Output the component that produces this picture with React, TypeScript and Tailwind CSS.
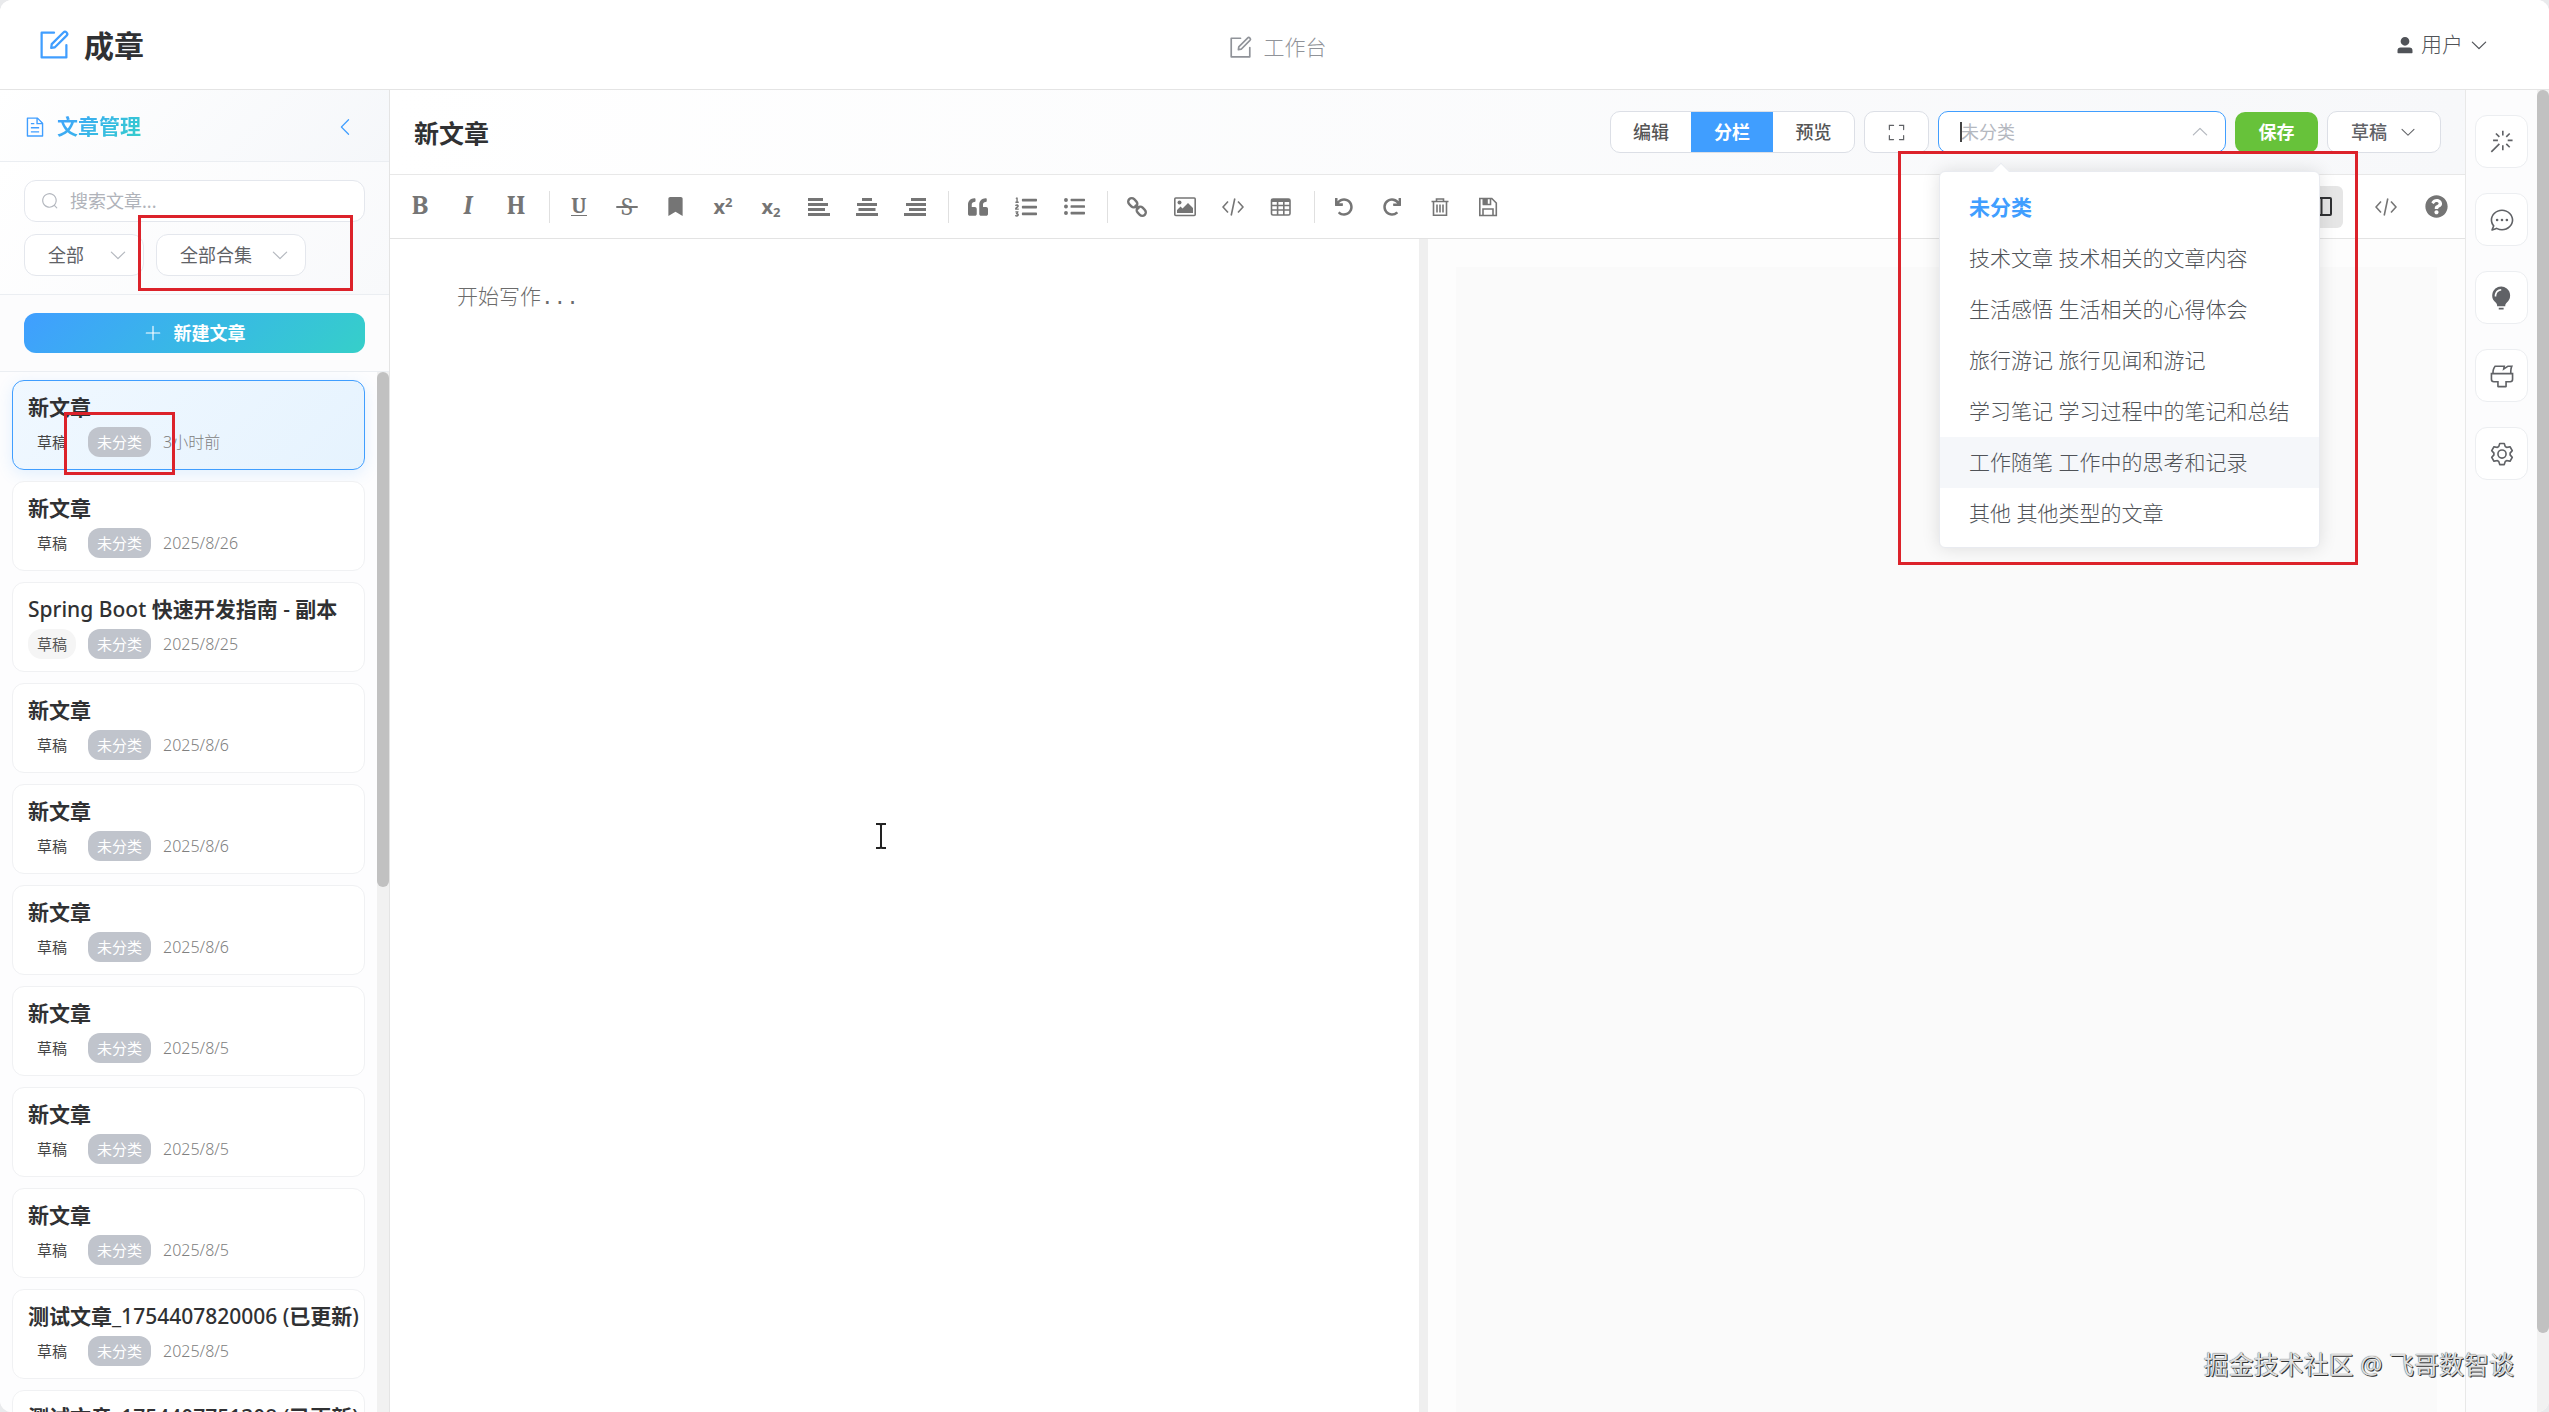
import React from "react";
import {
  FaBookmark,
  FaListOl,
  FaListUl,
  FaQuestionCircle,
  FaQuoteLeft,
  FaRedo,
  FaUndo,
} from "react-icons/fa";

const paths = {
  edit: "M832 512a32 32 0 1 1 64 0v352a32 32 0 0 1-32 32H160a32 32 0 0 1-32-32V160a32 32 0 0 1 32-32h352a32 32 0 0 1 0 64H192v640h640z m-362.048 42.24 52.8-7.552L847.104 222.4a32 32 0 1 0-45.248-45.248L477.44 501.44l-7.552 52.8zm422.4-422.4a96 96 0 0 1 0 135.808l-331.84 331.84a32 32 0 0 1-18.112 9.088L436.8 623.68a32 32 0 0 1-36.224-36.224l15.104-105.6a32 32 0 0 1 9.024-18.112l331.904-331.84a96 96 0 0 1 135.744 0z",
  arrowDown:
    "M831.872 340.864 512 652.672 192.128 340.864a30.592 30.592 0 0 0-42.752 0 29.12 29.12 0 0 0 0 41.6L489.664 714.24a32 32 0 0 0 44.672 0l340.288-331.712a29.12 29.12 0 0 0 0-41.728 30.592 30.592 0 0 0-42.752 0z",
  arrowLeft:
    "M609.408 149.376 277.76 489.6a32 32 0 0 0 0 44.672l331.648 340.352a29.12 29.12 0 0 0 41.728 0 30.592 30.592 0 0 0 0-42.752L339.264 511.936l311.872-319.872a30.592 30.592 0 0 0 0-42.688 29.12 29.12 0 0 0-41.728 0z",
  document:
    "M832 384H576V128H192v768h640zm-26.496-64L640 154.496V320zM160 64h480l256 256v608a32 32 0 0 1-32 32H160a32 32 0 0 1-32-32V96a32 32 0 0 1 32-32m160 448h384v64H320zm0-192h160v64H320zm0 384h384v64H320z",
  search:
    "m795.904 750.72 124.992 124.928a32 32 0 0 1-45.248 45.248L750.656 795.904a416 416 0 1 1 45.248-45.248zM480 832a352 352 0 1 0 0-704 352 352 0 0 0 0 704",
  plus: "M480 480V128a32 32 0 0 1 64 0v352h352a32 32 0 1 1 0 64H544v352a32 32 0 1 1-64 0V544H128a32 32 0 0 1 0-64z",
  fullScreen:
    "m160 96.064 192 .192a32 32 0 0 1 0 64l-192-.192V352a32 32 0 0 1-64 0V96h64zm0 831.872V928H96V672a32 32 0 1 1 64 0v191.936l192-.192a32 32 0 1 1 0 64zM864 96.064V96h64v256a32 32 0 1 1-64 0V160.064l-192 .192a32 32 0 1 1 0-64l192-.192zm0 831.872-192-.192a32 32 0 0 1 0-64l192 .192V672a32 32 0 1 1 64 0v256h-64z",
  user: "M288 320a224 224 0 1 0 448 0 224 224 0 1 0-448 0m544 608H160a32 32 0 0 1-32-32v-96a160 160 0 0 1 160-160h448a160 160 0 0 1 160 160v96a32 32 0 0 1-32 32z",
  magic:
    "M512 64h64v192h-64zm0 576h64v192h-64zM160 480v-64h192v64zm576 0v-64h192v64zM249.856 199.04l45.248-45.184L430.848 289.6 385.6 334.848 249.856 199.104zM657.152 606.4l45.248-45.248 135.744 135.744-45.248 45.248zM114.048 923.2 68.8 877.952l316.8-316.8 45.248 45.248zM702.4 334.848 657.152 289.6l135.744-135.744 45.248 45.248z",
  chat: "m174.72 855.68 135.296-45.12 23.68 11.84C388.096 849.536 448.576 864 512 864c211.84 0 384-166.784 384-352S723.84 160 512 160 128 326.784 128 512c0 69.12 24.96 139.264 70.848 199.232l22.08 28.8-46.272 115.584zm-45.248 82.56A32 32 0 0 1 89.6 896l58.368-145.92C94.72 680.32 64 596.864 64 512 64 299.904 256 96 512 96s448 203.904 448 416-192 416-448 416a461.056 461.056 0 0 1-206.912-48.384l-175.616 58.56z M512 563.2a51.2 51.2 0 1 1 0-102.4 51.2 51.2 0 0 1 0 102.4m192 0a51.2 51.2 0 1 1 0-102.4 51.2 51.2 0 0 1 0 102.4m-384 0a51.2 51.2 0 1 1 0-102.4 51.2 51.2 0 0 1 0 102.4",
  bulb: "M384 960v-64h192.064v64zm448-544a350.656 350.656 0 0 1-128.32 271.424C665.344 719.04 640 763.776 640 813.504V832H320v-14.336c0-48-19.392-95.36-57.216-124.992a351.552 351.552 0 0 1-128.448-344.256c25.344-136.448 133.888-248.128 269.76-276.48A352.384 352.384 0 0 1 832 416m-544 32c0-132.288 75.904-224 192-224v-64c-154.432 0-256 122.752-256 288z",
  brush:
    "M896 448H128v192a64 64 0 0 0 64 64h192v192h256V704h192a64 64 0 0 0 64-64zm-770.752-64c0-47.552 5.248-90.24 15.552-128 14.72-54.016 42.496-107.392 83.2-160h417.28l-15.36 70.336L736 96h211.2c-24.832 42.88-41.92 96.256-51.2 160a663.872 663.872 0 0 0-6.144 128H960v256a128 128 0 0 1-128 128H704v160a32 32 0 0 1-32 32H352a32 32 0 0 1-32-32V768H192A128 128 0 0 1 64 640V384h61.248zm64 0h636.544c-2.048-45.824.256-91.584 6.848-137.216 4.48-30.848 10.688-59.776 18.688-86.784h-96.64l-221.12 141.248L561.92 160H256.512c-25.856 37.888-43.776 75.456-53.952 112.832-8.768 32.064-13.248 69.12-13.312 111.168z",
  setting:
    "M600.704 64a32 32 0 0 1 30.464 22.208l35.2 109.376c14.784 7.232 28.928 15.36 42.432 24.512l112.384-24.192a32 32 0 0 1 34.432 15.36L944.32 364.8a32 32 0 0 1-4.032 37.504l-77.12 85.12a357.12 357.12 0 0 1 0 49.024l77.12 85.248a32 32 0 0 1 4.032 37.504l-88.704 153.6a32 32 0 0 1-34.432 15.296L708.8 803.904c-13.44 9.088-27.648 17.28-42.368 24.512l-35.264 109.376A32 32 0 0 1 600.704 960H423.296a32 32 0 0 1-30.464-22.208L357.696 828.48a351.616 351.616 0 0 1-42.56-24.64l-112.32 24.256a32 32 0 0 1-34.432-15.36L79.68 659.2a32 32 0 0 1 4.032-37.504l77.12-85.248a357.12 357.12 0 0 1 0-48.896l-77.12-85.248A32 32 0 0 1 79.68 364.8l88.704-153.6a32 32 0 0 1 34.432-15.296l112.32 24.256c13.568-9.152 27.776-17.408 42.56-24.64l35.2-109.312A32 32 0 0 1 423.232 64H600.64zm-23.424 64H446.72l-36.352 113.088-24.512 11.968a294.113 294.113 0 0 0-34.816 20.096l-22.656 15.36-116.224-25.088-65.28 113.152 79.68 88.192-1.92 27.136a293.12 293.12 0 0 0 0 40.192l1.92 27.136-79.808 88.192 65.344 113.152 116.224-25.024 22.656 15.296a294.113 294.113 0 0 0 34.816 20.096l24.512 11.968L446.72 896h130.688l36.48-113.152 24.448-11.904a288.282 288.282 0 0 0 34.752-20.096l22.592-15.296 116.288 25.024 65.28-113.152-79.744-88.192 1.92-27.136a293.12 293.12 0 0 0 0-40.256l-1.92-27.136 79.808-88.128-65.344-113.152-116.288 24.96-22.592-15.232a287.616 287.616 0 0 0-34.752-20.096l-24.448-11.904L577.344 128zM512 320a192 192 0 1 1 0 384 192 192 0 0 1 0-384m0 64a128 128 0 1 0 0 256 128 128 0 0 0 0-256",
};

const Icon = ({
  name,
  className,
}: {
  name: keyof typeof paths;
  className?: string;
}) => (
  <svg viewBox="0 0 1024 1024" fill="currentColor" className={className} aria-hidden="true">
    <path d={paths[name]} />
  </svg>
);

const Drawn = ({ children }: { children: React.ReactNode }) => (
  <svg
    viewBox="0 0 22 22"
    fill="none"
    stroke="currentColor"
    strokeWidth="1.6"
    className="size-[22px]"
    aria-hidden="true"
  >
    {children}
  </svg>
);

const CodeIcon = () => (
  <Drawn>
    <path d="M6 5.500 1 11l5 5.500M16 5.500 21 11l-5 5.500M12.800 2.500 9.200 19.500" />
  </Drawn>
);

// Three short bars over a full one, pushed left, centre or right
const AlignIcon = ({ side }: { side: "left" | "center" | "right" }) => {
  const x = (width: number) =>
    side === "left" ? 0 : side === "right" ? 22 - width : (22 - width) / 2;
  return (
    <svg viewBox="0 0 22 22" fill="currentColor" className="size-[22px]" aria-hidden="true">
      {[15, 20, 17, 22].map((width, i) => (
        <rect
          key={width}
          x={i === 0 && side === "center" ? 6 : x(width)}
          y={2 + i * 5}
          width={i === 0 && side === "center" ? 10 : width}
          height="3"
        />
      ))}
    </svg>
  );
};

const toolGroups = [
  [
    { label: "粗体", icon: <span className="font-serif text-[26px] font-bold">B</span> },
    { label: "斜体", icon: <span className="font-serif text-[26px] font-bold italic">I</span> },
    { label: "标题", icon: <span className="font-serif text-[26px] font-bold">H</span> },
  ],
  [
    {
      label: "下划线",
      icon: (
        <span className="border-b border-current font-serif text-[22px] leading-[18px] font-bold">
          U
        </span>
      ),
    },
    {
      label: "中划线",
      icon: <span className="font-serif text-[24px] line-through">&nbsp;S&nbsp;</span>,
    },
    { label: "标记", icon: <FaBookmark className="size-[19px]" /> },
    {
      label: "上角标",
      icon: (
        <span className="text-[20px] font-bold">
          x<sup className="text-[13px]">2</sup>
        </span>
      ),
    },
    {
      label: "下角标",
      icon: (
        <span className="text-[20px] font-bold">
          x<sub className="text-[13px]">2</sub>
        </span>
      ),
    },
    { label: "居左", icon: <AlignIcon side="left" /> },
    { label: "居中", icon: <AlignIcon side="center" /> },
    { label: "居右", icon: <AlignIcon side="right" /> },
  ],
  [
    { label: "段落引用", icon: <FaQuoteLeft className="size-[20px]" /> },
    { label: "有序列表", icon: <FaListOl className="size-[22px]" /> },
    { label: "无序列表", icon: <FaListUl className="size-[21px]" /> },
  ],
  [
    {
      label: "链接",
      icon: (
        <Drawn>
          <g transform="rotate(45 11 11)" strokeWidth="2.400">
            <rect x="0" y="7.500" width="10" height="7" rx="3.500" />
            <rect x="12" y="7.500" width="10" height="7" rx="3.500" />
            <path d="M8 11h6" strokeWidth="2" />
          </g>
        </Drawn>
      ),
    },
    {
      label: "添加图片",
      icon: (
        <Drawn>
          <rect x="0.800" y="2" width="20.400" height="17.500" rx="1" />
          <circle cx="5.500" cy="6.500" r="2" fill="currentColor" stroke="none" />
          <path d="M3 17v-3l3.500-3.500 2 2L14 7l5 5v5z" fill="currentColor" stroke="none" />
        </Drawn>
      ),
    },
    { label: "代码块", icon: <CodeIcon /> },
    {
      label: "添加表格",
      icon: (
        <Drawn>
          <rect x="1.500" y="3" width="18.500" height="16" rx="1.500" />
          <path d="M1.500 4.500h18.500" strokeWidth="3" />
          <path d="M1.500 9.500h18.500M1.500 14h18.500M7.600 4v15M13.800 4v15" />
        </Drawn>
      ),
    },
  ],
  [
    { label: "上一步", icon: <FaUndo className="size-[18px]" /> },
    { label: "下一步", icon: <FaRedo className="size-[18px]" /> },
    {
      label: "清空",
      icon: (
        <Drawn>
          <path d="M2.500 5.500h17M7.500 5V3h7v2M4.500 6v13.200h13V6M8 8.500v8M11 8.500v8M14 8.500v8" />
        </Drawn>
      ),
    },
    {
      label: "保存",
      icon: (
        <Drawn>
          <path d="M2.800 2.500h12l4.500 4.500v12.500H2.800z M6 19v-6h10v6M6.500 3v5.500h7V3" />
          <path d="M6.500 3h3.500v5h-3.500z" fill="currentColor" />
        </Drawn>
      ),
    },
  ],
];

const articles = [
  { title: "新文章", date: "3小时前" },
  { title: "新文章", date: "2025/8/26" },
  { title: "Spring Boot 快速开发指南 - 副本", date: "2025/8/25" },
  { title: "新文章", date: "2025/8/6" },
  { title: "新文章", date: "2025/8/6" },
  { title: "新文章", date: "2025/8/6" },
  { title: "新文章", date: "2025/8/5" },
  { title: "新文章", date: "2025/8/5" },
  { title: "新文章", date: "2025/8/5" },
  { title: "测试文章_1754407820006 (已更新)", date: "2025/8/5" },
  { title: "测试文章_1754407751308 (已更新)", date: "2025/8/5" },
];

const categories = [
  "未分类",
  "技术文章 技术相关的文章内容",
  "生活感悟 生活相关的心得体会",
  "旅行游记 旅行见闻和游记",
  "学习笔记 学习过程中的笔记和总结",
  "工作随笔 工作中的思考和记录",
  "其他 其他类型的文章",
];

const railItems: { label: string; icon: keyof typeof paths }[] = [
  { label: "智能生成", icon: "magic" },
  { label: "对话", icon: "chat" },
  { label: "灵感", icon: "bulb" },
  { label: "润色", icon: "brush" },
  { label: "设置", icon: "setting" },
];

const Header = () => (
  <header className="grid h-[90px] shrink-0 grid-cols-[1fr_auto_1fr] items-center border-b border-[#e4e4e4] bg-white px-9">
    <h1 className="flex items-center gap-3 text-[30px] font-bold text-[#303133]">
      <Icon name="edit" className="size-[36px] text-[#409eff]" />
      <span className="pt-[2px]">成章</span>
    </h1>
    <a
      href="#workbench"
      className="flex items-center gap-[10px] pt-[6px] pl-1 text-[21px] font-light text-[#909399]"
    >
      <Icon name="edit" className="size-[27px]" />
      工作台
    </a>
    <button className="flex items-center gap-[6px] justify-self-end pr-6 text-[21px] font-light text-[#505358]">
      <Icon name="user" className="size-[20px]" />
      用户
      <Icon name="arrowDown" className="size-[20px]" />
    </button>
  </header>
);

const Filter = ({ label, className }: { label: string; className: string }) => (
  <div className={`relative ${className}`}>
    <select
      aria-label={label}
      className="h-[42px] w-full appearance-none rounded-xl border border-[#e4e7ed] bg-white pl-[23px] text-lg text-[#606266]"
    >
      <option>{label}</option>
    </select>
    <Icon
      name="arrowDown"
      className="pointer-events-none absolute top-[11px] right-4 size-5 text-[#b4b8bf]"
    />
  </div>
);

// Latin runs are set a step lighter than the Chinese around them
const Title = ({ text }: { text: string }) => (
  <>
    {text.split(/([\x20-\x7e]+)/).map((part, i) => (
      <span key={i} className={i % 2 ? "font-medium" : "font-bold"}>
        {part}
      </span>
    ))}
  </>
);

const Sidebar = () => (
  <aside className="flex w-[390px] shrink-0 flex-col border-r border-[#e4e4e4] bg-[#fdfdfe]">
    <div className="flex h-[72px] shrink-0 items-center border-b border-[#ebeef2] bg-linear-135 from-white to-[#f5f7fa] pt-[2px] pr-8 pl-6">
      <Icon name="document" className="size-[22px] text-[#409eff]" />
      <h2 className="ml-[11px] bg-linear-135 from-[#409eff] to-[#36cfc9] bg-clip-text text-[21px] font-bold text-transparent">
        文章管理
      </h2>
      <button aria-label="收起" className="ml-auto text-[#409eff]">
        <Icon name="arrowLeft" className="size-[22px]" />
      </button>
    </div>

    <div className="flex h-[133px] shrink-0 flex-col gap-3 border-b border-[#ebeef2] bg-linear-135 from-white to-[#f8f9fb] pt-[18px] pr-6 pl-6">
      <div className="relative">
        <Icon name="search" className="absolute top-3 left-[17px] size-[18px] text-[#b4b8bf]" />
        <input
          type="text"
          aria-label="搜索文章"
          placeholder="搜索文章..."
          className="h-[42px] w-full rounded-xl border border-[#e4e7ed] bg-white pl-[45px] text-lg placeholder:text-[#b0b3ba]"
        />
      </div>
      <div className="relative flex gap-3">
        <Filter label="全部" className="w-[120px]" />
        <Filter label="全部合集" className="w-[150px]" />
        <div className="pointer-events-none absolute -top-[19px] left-[114px] h-[76px] w-[215px] border-3 border-[#dc222a]" />
      </div>
    </div>

    <div className="flex h-[77px] shrink-0 items-center border-b border-[#ebeef2] bg-[#fcfcfd] px-6">
      <button className="flex h-10 w-full items-center justify-center gap-3 rounded-xl bg-linear-135 from-[#409eff] to-[#36cfc9] text-lg font-bold text-white">
        <Icon name="plus" className="size-[18px]" />
        新建文章
      </button>
    </div>

    <div className="flex min-h-0 flex-1">
      <ul className="flex min-w-0 flex-1 flex-col gap-[11px] overflow-hidden pt-2 pr-3 pl-3">
        {articles.map((article, i) => (
          <li
            key={i}
            className={
              i === 0
                ? "relative shrink-0 rounded-xl border border-[#409eff] bg-linear-135 from-[#f0f8ff] to-[#e6f3fe] py-3 pl-[15px] shadow-[0_4px_16px_rgba(64,158,255,0.15)]"
                : "relative shrink-0 rounded-xl border border-[#f0f1f3] bg-white py-3 pl-[15px]"
            }
          >
            <h3 className="mb-[6px] text-[21px] leading-7 whitespace-nowrap text-[#303133]">
              <Title text={article.title} />
            </h3>
            <div className="flex items-center text-[15px] leading-[30px]">
              <span
                className={
                  i === 2
                    ? "rounded-[14px] bg-[#f5f5f5] px-[9px] text-[#555]"
                    : "px-[9px] text-[#444]"
                }
              >
                草稿
              </span>
              <span className="ml-3 rounded-[12px] bg-[#c0c4cc] px-[9px] text-white">未分类</span>
              <span className="ml-3 text-base leading-[30px] font-light text-[#808080]">
                {article.date}
              </span>
            </div>
            {i === 0 && (
              <div className="pointer-events-none absolute top-[31px] left-[51px] h-[63px] w-[111px] border-3 border-[#dc222a]" />
            )}
          </li>
        ))}
      </ul>
      <div className="w-3 shrink-0 bg-[#f1f1f1]">
        <div className="h-[49.5%] rounded-full bg-[#c1c1c1]" />
      </div>
    </div>
  </aside>
);

const CategorySelect = () => (
  <div className="relative w-[288px]">
    <input
      type="text"
      role="combobox"
      aria-expanded="true"
      aria-label="分类"
      placeholder="未分类"
      className="h-[42px] w-full rounded-[10px] border border-[#409eff] bg-white pl-[22px] text-lg placeholder:text-[#b4b8bf]"
    />
    <span className="absolute top-[11px] left-[22px] h-5 w-0.5 bg-[#444]" />
    <Icon name="arrowDown" className="absolute top-[11px] right-4 size-5 rotate-180 text-[#b4b8bf]" />
    <div className="absolute top-[60px] left-px w-[381px] rounded-md border border-[#e9ebf0] bg-white pt-[10px] pb-2 shadow-[0_0_18px_rgba(0,0,0,0.12)]">
      <span className="absolute -top-[7px] left-[55px] size-3 rotate-45 border-t border-l border-[#e9ebf0] bg-white" />
      <ul role="listbox">
        {categories.map((item, i) => (
          <li
            key={item}
            role="option"
            aria-selected={i === 0}
            className={
              i === 0
                ? "relative px-[29px] text-[21px] leading-[51px] font-bold text-[#409eff]"
                : i === 5
                  ? "bg-[#f5f7fa] px-[29px] text-[21px] leading-[51px] font-light text-[#505358]"
                  : "px-[29px] text-[21px] leading-[51px] font-light text-[#505358]"
            }
          >
            {item}
          </li>
        ))}
      </ul>
    </div>
    <div className="pointer-events-none absolute top-10 -left-10 h-[414px] w-[460px] border-3 border-[#dc222a]" />
  </div>
);

const EditorHeader = () => (
  <div className="relative z-10 flex h-[85px] shrink-0 items-center gap-[9px] border-b border-[#e8e8e8] bg-linear-to-r from-white to-[#f7f8fa] px-6">
    <h2 className="mr-auto pt-1 text-[25px] font-bold text-[#303133]">新文章</h2>
    <div className="flex h-[42px] overflow-hidden rounded-[10px] border border-[#dcdfe6] bg-white text-lg text-[#555]">
      <button className="w-20 font-medium">编辑</button>
      <button className="w-[82px] bg-[#409eff] font-semibold text-white">分栏</button>
      <button className="w-[81px] font-medium">预览</button>
    </div>
    <button
      aria-label="全屏"
      className="flex h-[42px] w-[65px] items-center justify-center rounded-[10px] border border-[#dcdfe6] bg-white text-[#606266]"
    >
      <Icon name="fullScreen" className="size-[19px]" />
    </button>
    <CategorySelect />
    <button className="h-[41px] w-[83px] rounded-[10px] bg-[#67c23a] text-lg font-bold text-white">
      保存
    </button>
    <button className="flex h-[42px] w-[114px] items-center justify-center gap-3 rounded-[10px] border border-[#dcdfe6] bg-white text-lg font-medium text-[#606266]">
      草稿
      <Icon name="arrowDown" className="size-[18px]" />
    </button>
  </div>
);

const Toolbar = () => (
  <div className="flex h-16 shrink-0 items-center border-b border-[#e3e3e3] bg-white pr-[5px] pl-[6px] text-[#757575]">
    {toolGroups.map((group, i) => (
      <div key={i} className="flex items-center">
        {i > 0 && <span className="mr-[5px] ml-[9px] h-8 w-px bg-[#e0e0e0]" />}
        {group.map((tool) => (
          <button
            key={tool.label}
            aria-label={tool.label}
            className="flex h-10 w-12 items-center justify-center"
          >
            {tool.icon}
          </button>
        ))}
      </div>
    ))}
    <button
      aria-label="单双栏"
      className="mr-[19px] ml-auto flex size-[42px] items-center justify-center rounded-md bg-[#e6e6e6] text-[#303133]"
    >
      <Drawn>
        <rect x="1" y="2" width="19" height="17" rx="1" strokeWidth="2" />
        <path d="M10.500 2v17" strokeWidth="2" />
      </Drawn>
    </button>
    <button aria-label="查看源码" className="flex w-12 items-center justify-center">
      <CodeIcon />
    </button>
    <button aria-label="帮助" className="ml-[2px] flex w-12 items-center justify-center">
      <FaQuestionCircle className="size-[23px]" />
    </button>
  </div>
);

const App = () => {
  return (
    <div className="h-screen bg-[#e9eaec] font-['Noto_Sans','Noto_Sans_CJK_SC',sans-serif]">
      <div className="relative flex h-full flex-col overflow-hidden rounded-xl bg-white">
        <Header />
        <div className="flex min-h-0 flex-1">
          <Sidebar />

          <main className="flex min-w-0 flex-1 flex-col">
            <EditorHeader />
            <Toolbar />
            <div className="flex min-h-0 flex-1">
              <textarea
                aria-label="正文"
                placeholder="开始写作..."
                className="w-[49.6%] resize-none bg-white px-[67px] pt-[42px] font-['Liberation_Mono','Noto_Sans_CJK_SC',monospace] text-[21px] leading-9 font-light placeholder:text-[#6b6b6b]"
              />
              <div className="w-[9px] bg-[#efefef]" />
              <section aria-label="预览" className="min-w-0 flex-1 bg-[#fdfdfd] px-7 pt-7">
                <div className="h-full bg-[#fafafa]" />
              </section>
            </div>
          </main>

          <nav className="flex w-[72px] shrink-0 flex-col items-center gap-[25px] border-l border-[#e8e8e8] bg-[#fcfcfd] pt-[25px]">
            {railItems.map((item) => (
              <button
                key={item.label}
                aria-label={item.label}
                className="flex size-[53px] items-center justify-center rounded-xl border border-[#eceef1] bg-white text-[#606266]"
              >
                <Icon name={item.icon} className="size-[26px]" />
              </button>
            ))}
          </nav>
          <div className="w-3 shrink-0 bg-[#f1f1f1]">
            <div className="h-[94%] rounded-full bg-[#c1c1c1]" />
          </div>
        </div>

        {/* text cursor */}
        <svg
          viewBox="0 0 12 28"
          fill="none"
          stroke="#222"
          strokeWidth="2"
          className="pointer-events-none absolute top-[822px] left-[875px] h-7 w-3"
          aria-hidden="true"
        >
          <path d="M1 2h4l1 1 1-1h4M6 3v22M1 26h4l1-1 1 1h4" />
        </svg>

        <p className="pointer-events-none absolute right-[35px] bottom-[30px] text-[25px] leading-9 text-[#dedede] [text-shadow:1px_1px_0_#333,0_0_1px_#333]">
          掘金技术社区 @ 飞哥数智谈
        </p>
      </div>
    </div>
  );
};

export default App;
